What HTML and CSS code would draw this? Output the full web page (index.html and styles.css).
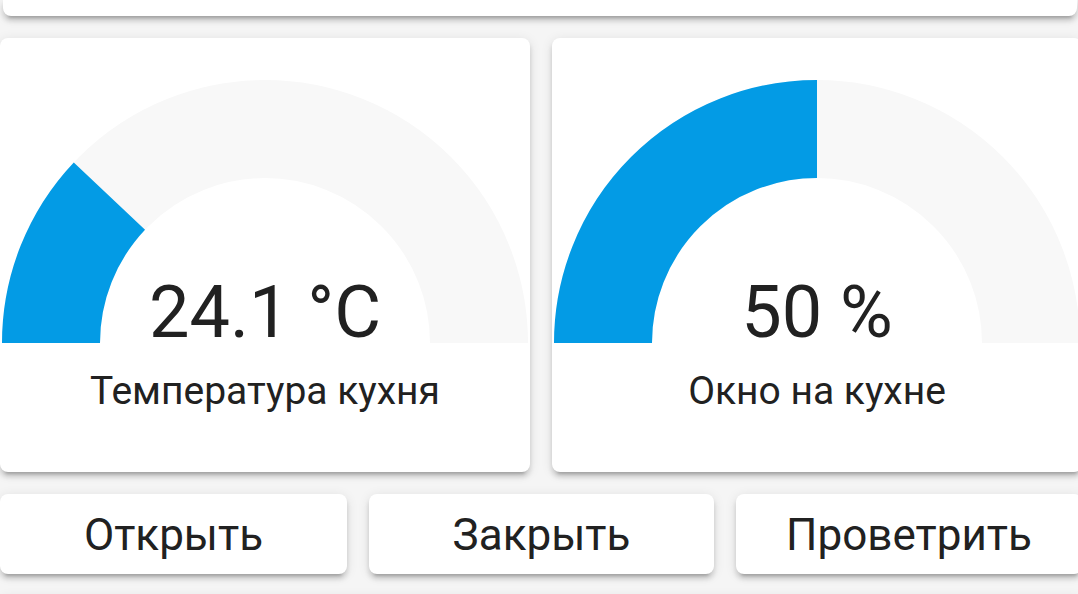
FILE: index.html
```html
<!DOCTYPE html>
<html lang="ru">
<head>
<meta charset="utf-8">
<link rel="stylesheet" href="styles.css">
</head>
<body>
<div class="page">
  <div class="card top-card"></div>

  <div class="gauges">
    <div class="card gauge-card">
      <div class="gauge">
        <svg class="gauge-svg" viewBox="-265 -263 530 263" width="530" height="263">
          <path class="arc-bg" d="M -214 0 A 214 214 0 0 1 214 0"/>
          <path class="arc-val" d="M -214 0 A 214 214 0 0 1 -155.6 -146.96"/>
        </svg>
        <div class="value">24.1 °C</div>
      </div>
      <div class="label">Температура кухня</div>
    </div>
    <div class="card gauge-card">
      <div class="gauge">
        <svg class="gauge-svg" viewBox="-265 -263 530 263" width="530" height="263">
          <path class="arc-bg" d="M -214 0 A 214 214 0 0 1 214 0"/>
          <path class="arc-val" d="M -214 0 A 214 214 0 0 1 0 -214"/>
        </svg>
        <div class="value">50 %</div>
      </div>
      <div class="label">Окно на кухне</div>
    </div>
  </div>

  <div class="buttons">
    <div class="card button">Открыть</div>
    <div class="card button">Закрыть</div>
    <div class="card button">Проветрить</div>
  </div>

  <div class="card bottom-card"></div>
</div>
</body>
</html>
```

FILE: styles.css
```css
html, body {
  margin: 0;
  padding: 0;
  background: #f5f5f5;
  overflow: hidden;
  height: 594px;
}

.page {
  width: 1082px;
  height: 594px;
  overflow: hidden;
  display: flex;
  flex-direction: column;
  gap: 22px;
  font-family: Roboto, "Noto Sans", sans-serif;
  color: #212121;
}

.card {
  background: #ffffff;
  border-radius: 8px;
  box-shadow: 0 5px 5px rgba(0, 0, 0, 0.14), 0 2px 12px rgba(0, 0, 0, 0.10), 0 7px 3px -5px rgba(0, 0, 0, 0.18);
}

.top-card {
  flex: none;
  height: 16px;
  margin-left: 3px;
  width: 1074px;
  border-radius: 0 0 8px 8px;
}

.gauges {
  flex: none;
  display: grid;
  grid-template-columns: 530px 530px;
  gap: 22px;
}

.gauge-card {
  height: 434px;
  display: flex;
  flex-direction: column;
  align-items: center;
}

.gauge {
  position: relative;
  width: 530px;
  height: 263px;
  margin-top: 42px;
}

.gauge-svg {
  display: block;
}

.arc-bg {
  fill: none;
  stroke: #f8f8f8;
  stroke-width: 98;
}

.arc-val {
  fill: none;
  stroke: #039be5;
  stroke-width: 98;
}

.value {
  position: absolute;
  left: 0;
  right: 0;
  bottom: -6px;
  text-align: center;
  font-size: 72px;
  line-height: 72px;
}

.label {
  margin-top: 29px;
  font-size: 39px;
  line-height: 39px;
}

.buttons {
  flex: none;
  display: grid;
  grid-template-columns: 347px 345px 346px;
  gap: 22px;
}

.button {
  height: 80px;
  display: flex;
  align-items: center;
  justify-content: center;
  font-size: 44px;
  line-height: 44px;
  padding-top: 2px;
  box-sizing: border-box;
}

.bottom-card {
  flex: none;
  height: 20px;
}
```
